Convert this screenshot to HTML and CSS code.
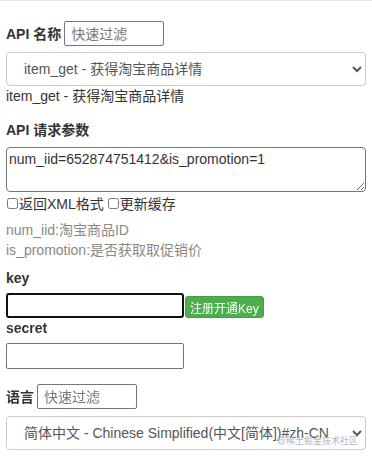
FILE: index.html
```html
<!DOCTYPE html>
<html lang="zh-CN">
<head>
    <meta charset="UTF-8">
    <meta name="viewport" content="width=device-width, initial-scale=1.0">
    <title>API 测试</title>
    <link rel="stylesheet" href="styles.css">
</head>
<body>
    <main class="panel">
        <div class="row first">
            <label class="label">API 名称</label>
            <input type="text" class="filter" placeholder="快速过滤">
        </div>
        <select class="select">
            <option>item_get - 获得淘宝商品详情</option>
        </select>
        <div class="desc">item_get - 获得淘宝商品详情</div>

        <div class="label heading">API 请求参数</div>
        <textarea class="params">num_iid=652874751412&amp;is_promotion=1</textarea>
        <div class="checks">
            <label><input type="checkbox">返回XML格式</label>
            <label><input type="checkbox">更新缓存</label>
        </div>
        <div class="hint">num_iid:淘宝商品ID</div>
        <div class="hint">is_promotion:是否获取取促销价</div>

        <div class="label field-label key-label">key</div>
        <div class="key-row">
            <input type="text" class="text key-input" autofocus>
            <button class="btn-green">注册开通Key</button>
        </div>
        <div class="label field-label">secret</div>
        <input type="text" class="text secret-input">

        <div class="row lang">
            <label class="label">语言</label>
            <input type="text" class="filter" placeholder="快速过滤">
        </div>
        <div class="select-wrap">
            <select class="select">
                <option>简体中文 - Chinese Simplified(中文[简体])#zh-CN</option>
            </select>
            <span class="watermark">@稀土掘金技术社区</span>
        </div>
    </main>
</body>
</html>
```

FILE: styles.css
```css
body {
    margin: 0;
    padding: 0;
    font-family: "Liberation Sans", Arial, "Noto Sans CJK SC", sans-serif;
    font-size: 14px;
    color: #333;
    background: #fff;
}

.panel {
    border-top: 1px solid #e6e6e6;
    padding: 0 6px;
}

.row {
    display: flex;
    align-items: center;
    gap: 3px;
}

.row.first {
    margin-top: 20px;
}

.label {
    font-weight: bold;
    color: #333;
    line-height: 20px;
}

.filter {
    width: 100px;
    height: 25px;
    box-sizing: border-box;
    border: 1px solid #767676;
    border-radius: 2px;
    padding: 0 6px;
    font-family: inherit;
    font-size: 14px;
    margin: 0;
}

.filter::placeholder {
    color: #777;
}

.select {
    display: block;
    width: 100%;
    height: 34px;
    box-sizing: border-box;
    margin: 6px 0 0;
    padding: 0 8px 0 13px;
    border: 1px solid #ccc;
    border-radius: 4px;
    background: #fff;
    color: #555;
    font-family: inherit;
    font-size: 14px;
}

.desc {
    line-height: 20px;
    color: #333;
}

.heading {
    margin-top: 14px;
}

.params {
    display: block;
    width: 100%;
    height: 45px;
    box-sizing: border-box;
    margin: 7px 0 0;
    padding: 3px 2px;
    border: 1px solid #767676;
    border-radius: 4px;
    font-family: inherit;
    font-size: 14px;
    color: #333;
    resize: vertical;
}

.checks {
    display: flex;
    gap: 3px;
    height: 22px;
    align-items: center;
}

.checks label {
    display: flex;
    align-items: center;
}

.checks input {
    width: 11px;
    height: 11px;
    margin: 0 1px 0 1px;
}

.hint {
    line-height: 20px;
    color: #888;
}

.checks + .hint {
    margin-top: 6px;
}

.key-label {
    margin-top: 8px;
}

.key-row {
    display: flex;
    align-items: flex-end;
    margin-top: 6px;
}

.text {
    width: 178px;
    height: 26px;
    box-sizing: border-box;
    margin: 0;
    border: 1px solid #767676;
    border-radius: 2px;
    font-family: inherit;
    font-size: 14px;
    padding: 0 4px;
}

.key-input {
    height: 25px;
    border: 2px solid #111;
    border-radius: 3px;
    outline: none;
}

.btn-green {
    height: 22px;
    padding: 0 4px;
    margin-left: 1px;
    background: #4cae4c;
    border: 1px solid #45a045;
    border-radius: 3px;
    color: #fff;
    font-family: inherit;
    font-size: 12px;
    cursor: pointer;
}

.field-label + .text,
.field-label + .key-row {
    margin-top: 5px;
}

.secret-input {
    display: block;
}

.lang {
    margin-top: 15px;
}

.select-wrap {
    position: relative;
}

.select-wrap .select {
    margin-top: 7px;
}

.watermark {
    position: absolute;
    right: 8px;
    bottom: 3px;
    font-size: 9px;
    color: #b8b8b8;
}
```
